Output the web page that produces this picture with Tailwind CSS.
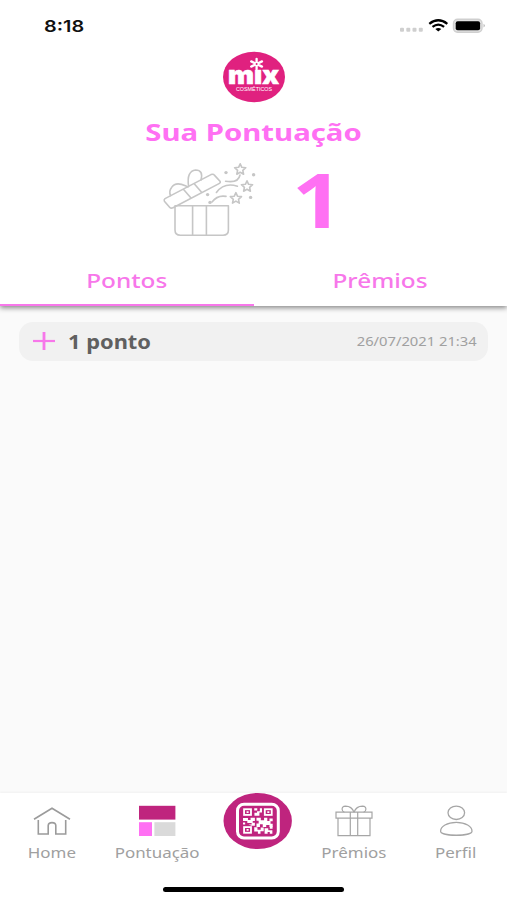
<!DOCTYPE html>
<html lang="pt-BR">
<head>
    <meta charset="UTF-8">
    <meta name="viewport" content="width=device-width, initial-scale=1.0">
    <title>Sua Pontuação</title>
    <script src="https://cdn.jsdelivr.net/npm/@tailwindcss/browser@4"></script>
</head>
<body class="w-[507px] h-[900px] overflow-hidden bg-[#fafafa] flex flex-col font-['Noto_Sans','Open_Sans',sans-serif]">
    <!-- Header -->
    <header class="relative z-10 h-[306px] shrink-0 bg-white shadow-[0_2px_5px_rgba(0,0,0,0.45)] flex flex-col">
        <div class="h-[50px] pl-[44px] pr-[21px] flex items-center justify-between">
            <span class="font-['Inter',sans-serif] font-semibold text-[16px] leading-none text-[#111] origin-left scale-x-[1.24] mt-[1px]">8:18</span>
            <svg class="mt-[2px]" width="88" height="20" viewBox="0 0 88 20">
                <g fill="#cfcfcf">
                    <rect x="2" y="11.7" width="4" height="4" rx="1"/>
                    <rect x="8.3" y="11.7" width="4" height="4" rx="1"/>
                    <rect x="14.5" y="11.7" width="4" height="4" rx="1"/>
                    <rect x="20.8" y="11.7" width="4" height="4" rx="1"/>
                </g>
                <g fill="none" stroke="#000" stroke-width="2.3">
                    <path d="M31.3 7.8Q40.3 0.8 49.3 7.8"/>
                    <path d="M34.5 10.9Q40.3 6.4 46.1 10.9"/>
                </g>
                <path d="M37.3 13Q40.3 11 43.3 13L40.3 15.6Z"/>
                <rect x="55.5" y="3.2" width="28.5" height="13" rx="4" fill="#e2e2e2" stroke="#cfcfcf" stroke-width="1.4"/>
                <rect x="57.7" y="5.2" width="24.4" height="9" rx="2"/>
                <path d="M85.6 7.8Q88 9.7 85.6 11.6Z" fill="#aaa"/>
            </svg>
        </div>
        <svg class="self-center mt-[1px]" width="64" height="53" viewBox="0 0 64 53">
            <ellipse cx="32" cy="26" rx="31" ry="25.3" fill="#e0217f"/>
            <text x="6" y="33" textLength="51" lengthAdjust="spacingAndGlyphs" font-family="Inter, sans-serif" font-weight="900" font-size="25" fill="#fff" stroke="#fff" stroke-width="0.6">mix</text>
            <!-- a flor fica no lugar do pingo do i -->
            <rect x="28" y="8" width="13" height="10.2" fill="#e0217f"/>
            <path d="M34.6 7.8V18.2M29.2 10.4L40 15.6M40 10.4L29.2 15.6" stroke="#fff" stroke-width="2.3" stroke-linecap="round"/>
            <circle cx="34.6" cy="13" r="1" fill="#e0217f"/>
            <text x="14" y="39.8" textLength="36" lengthAdjust="spacingAndGlyphs" font-family="Liberation Sans, sans-serif" font-size="4.8" fill="#fff">COSMÉTICOS</text>
        </svg>
        <h1 class="self-center mt-[12px] text-[24px] leading-[32px] font-bold text-[#ff70f3] scale-x-[1.222]">Sua Pontuação</h1>
        <div class="h-[90px] pl-[160px] mt-[6px] flex">
            <svg class="shrink-0 mt-[4px]" width="100" height="86" viewBox="160 158 100 86" fill="none" stroke="#c6c6c6" stroke-width="1.6" stroke-linejoin="round" stroke-linecap="round">
                <path d="M175 205.7H228.4V230Q228.4 235.2 223 235.2H180.4Q175 235.2 175 230ZM192.6 205.7V235M206.4 205.7V235"/>
                <path d="M165 198.6L211 174.6Q213.4 173.7 214.6 175.4L220 181.2Q221 182.5 219 183.6L173 207.8Q171 208.8 169.6 207.2L164.4 201.2Q163.6 199.7 165 198.6ZM183.4 189.2L191.2 198.2M194 183.6L201.8 192.6"/>
                <path d="M170.6 195.6Q168.6 191 171.6 187.4Q175.6 181.4 185.4 185.8L188 187"/>
                <path d="M188.6 186.2Q186.4 171.2 195.6 170Q203.6 170 201 180"/>
                <path d="M225.6 181.2Q238.4 183.4 240 175M216.4 192.5Q224 182 237.4 186.2M212 202Q217.4 194.8 226 196.4"/>
                <path id="star" d="M240.2 163.8L241.8 167.3L245.8 167.7L242.8 170.4L243.6 174.2L240.2 172.2L236.8 174.2L237.6 170.4L234.6 167.7L238.6 167.3Z"/>
                <use href="#star" x="6.8" y="17"/>
                <use href="#star" x="-4.3" y="28.9"/>
                <g fill="#c6c6c6" stroke="none">
                    <circle cx="226" cy="172.6" r="1.7"/>
                    <circle cx="253.6" cy="174.8" r="1.7"/>
                    <circle cx="207.6" cy="194.6" r="1.7"/>
                    <circle cx="210" cy="202.4" r="1.7"/>
                    <circle cx="250.6" cy="197.4" r="1.7"/>
                </g>
            </svg>
            <span class="ml-[32px] mt-[6px] text-[76px] leading-[78px] font-bold text-[#ff70f3] origin-left scale-x-[1.17]">1</span>
        </div>
        <nav class="mt-auto grid grid-cols-2 text-center text-[20px] leading-[24px] font-medium text-[#f777ea]">
            <div class="h-[37px] border-b-[2px] border-[#f777ea]"><span class="inline-block scale-x-[1.22] translate-x-[0.5px]">Pontos</span></div>
            <div class="h-[37px]"><span class="inline-block scale-x-[1.22]">Prêmios</span></div>
        </nav>
    </header>

    <!-- Lista de pontos -->
    <main class="flex-1 pt-[16px] px-[19px]">
        <div class="h-[39px] rounded-[14px] bg-[#f1f1f1] pl-[14px] pr-[11px] flex items-center">
            <svg class="-mt-[1px]" width="22" height="20" viewBox="0 0 22 20" stroke="#f777ea">
                <path d="M0 10H22" stroke-width="2.2"/>
                <path d="M11 1V19" stroke-width="2.8"/>
            </svg>
            <span class="ml-[13px] mt-[1px] text-[19px] leading-none font-bold text-[#606060] origin-left scale-x-[1.15]">1 ponto</span>
            <span class="ml-auto mt-[2px] text-[12.5px] leading-none text-[#a0a0a0] origin-right scale-x-[1.18]">26/07/2021 21:34</span>
        </div>
    </main>

    <!-- Menu inferior -->
    <footer class="h-[107px] shrink-0 bg-white shadow-[0_-1px_2px_rgba(0,0,0,0.04)] flex flex-col justify-between items-center">
        <nav class="w-full pt-[10px] grid grid-cols-[103px_108px_93px_100px_103px] text-center text-[14px] leading-[20px] text-[#a0a0a0]">
            <div class="flex flex-col items-center">
                <svg width="38" height="36" viewBox="0 0 38 36" fill="none" stroke="#9b9b9b" stroke-width="1.6">
                    <path d="M1 16.2L19 5.2L37 16.2"/>
                    <path d="M5.3 17V31H15.2V22.6Q15.4 19.6 19 19.6Q22.8 19.6 22.8 22.6V31H32.7V17"/>
                </svg>
                <span class="mt-[4px] scale-x-[1.21]">Home</span>
            </div>
            <div class="flex flex-col items-center">
                <svg width="38" height="36" viewBox="0 0 38 36">
                    <rect x="1" y="2.8" width="36.4" height="13.8" fill="#bf247e"/>
                    <rect x="1" y="19.2" width="13" height="13.8" fill="#ff70f3"/>
                    <rect x="16.4" y="19.2" width="21" height="13.8" fill="#dadada"/>
                </svg>
                <span class="mt-[4px] scale-x-[1.21]">Pontuação</span>
            </div>
            <div class="relative">
                <svg class="absolute left-[12px] -top-[11px]" width="70" height="58" viewBox="0 0 70 58">
                    <ellipse cx="34.7" cy="29" rx="34.2" ry="28.1" fill="#bf247e"/>
                    <rect x="14.5" y="12.2" width="40.8" height="33.8" rx="6.5" fill="none" stroke="#fff" stroke-width="3"/>
                    <g transform="translate(34.9 29) scale(1.08 1.09) translate(-34.8 -28.8)">
                        <g fill="none" stroke="#fff" stroke-width="1.7">
                            <rect x="22" y="18" width="6.4" height="5.2"/>
                            <rect x="41.2" y="18" width="6.4" height="5.2"/>
                            <rect x="22" y="34.4" width="6.4" height="5.2"/>
                        </g>
                        <g fill="#fff">
                            <path d="M24.3 19.8h1.9v1.6h-1.9zM43.5 19.8h1.9v1.6h-1.9zM24.3 36.2h1.9v1.6h-1.9z"/>
                            <path d="M31.4 17.2h2.8v2h-2.8zM36.6 17.2h2v3.8h-2.4v3h-4.6v-2.8h2.4v-1.4h2.6z"/>
                            <path d="M21 26h4.6v1.8h2.4v-1.9h4v2.8h-2v2h-5v-1.9h-4zM21 30.2h2v1.8h-2zM26 32h3v-1.6h3v2.8h-3z"/>
                            <path d="M33.5 25.8h4v2.2h3v-2.2h3v3h2v-2.2h3v2.4h-2v2.4h2v3h-3v-2h-3v2h-3.2v-2.6h-2.6v2.4h-3.2v-3h2v-2.6h-2z"/>
                            <path d="M31.4 34.6h3v2.2h3v-2h2.8v3.4h-3v2.2h-2.4v-2h-3.4zM41 35.4h3.4v2h3.8v3h-2.4v-1.4h-2v1.4h-2.8zM45.8 33.8h2.6v2h-2.6z"/>
                        </g>
                    </g>
                </svg>
            </div>
            <div class="flex flex-col items-center">
                <svg width="38" height="36" viewBox="0 0 38 36" fill="none" stroke="#a6a6a6" stroke-width="1.2">
                    <path d="M1 9.2H37V15.2H1ZM3 15.2V32.6H35V15.2M15.3 9.2V32.6M22.7 9.2V32.6"/>
                    <path d="M19 9.2Q16.6 3.2 10.6 3.2Q6.6 3.4 7.2 6.8Q7.4 8.6 9.4 9.2M19 9.2Q21.4 3.2 27.4 3.2Q31.4 3.4 30.8 6.8Q30.6 8.6 28.6 9.2"/>
                </svg>
                <span class="mt-[4px] scale-x-[1.21]">Prêmios</span>
            </div>
            <div class="flex flex-col items-center">
                <svg width="38" height="36" viewBox="0 0 38 36" fill="none" stroke="#a6a6a6" stroke-width="1.3">
                    <ellipse cx="19.3" cy="9.8" rx="8.3" ry="6.7"/>
                    <path d="M3.6 28.2C3.6 23.6 10 19.3 19.3 19.3C28.6 19.3 35 23.6 35 28.2C35 33.6 3.6 33.6 3.6 28.2Z"/>
                </svg>
                <span class="mt-[4px] scale-x-[1.21] translate-x-[0.5px]">Perfil</span>
            </div>
        </nav>
        <div class="w-[181px] h-[5px] rounded-full bg-black mb-[8px]"></div>
    </footer>
</body>
</html>
